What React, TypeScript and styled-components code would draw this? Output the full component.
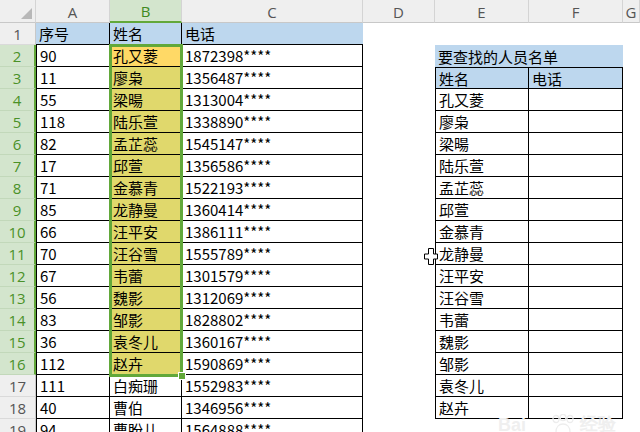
import styled, { createGlobalStyle } from "styled-components";

const GlobalStyle = createGlobalStyle`
  html, body {
    margin: 0;
    padding: 0;
    background: #fff;
    overflow: hidden;
  }
`;

const GREEN = "#62a83a";
const BLUE = "#bdd7ee";

const cols = ["A", "B", "C", "D", "E", "F", "G"];

const left: [string, string, string][] = [
  ["序号", "姓名", "电话"],
  ["90", "孔又菱", "1872398****"],
  ["11", "廖枭", "1356487****"],
  ["55", "梁暘", "1313004****"],
  ["118", "陆乐萱", "1338890****"],
  ["82", "孟芷蕊", "1545147****"],
  ["17", "邱萱", "1356586****"],
  ["71", "金慕青", "1522193****"],
  ["85", "龙静曼", "1360414****"],
  ["66", "汪平安", "1386111****"],
  ["70", "汪谷雪", "1555789****"],
  ["67", "韦蕾", "1301579****"],
  ["56", "魏影", "1312069****"],
  ["83", "邹影", "1828802****"],
  ["36", "袁冬儿", "1360167****"],
  ["112", "赵卉", "1590869****"],
  ["111", "白痴珊", "1552983****"],
  ["40", "曹伯", "1346956****"],
  ["94", "曹盼儿", "1564888****"],
];

const names = [
  "孔又菱", "廖枭", "梁暘", "陆乐萱", "孟芷蕊", "邱萱", "金慕青", "龙静曼",
  "汪平安", "汪谷雪", "韦蕾", "魏影", "邹影", "袁冬儿", "赵卉",
];

const App = () => {
  const rows = [];
  for (let r = 1; r <= 19; r++) {
    const sel = r >= 2 && r <= 16;
    const d = left[r - 1];
    rows.push(
      <RowHead key={`h${r}`} $sel={sel}>
        {r}
      </RowHead>
    );
    // A, B, C
    rows.push(
      <Cell key={`a${r}`} $fill={r === 1 ? BLUE : undefined} $r $b $l={r > 1}>
        {d[0]}
      </Cell>
    );
    rows.push(
      <Cell
        key={`b${r}`}
        $fill={r === 1 ? BLUE : r === 2 ? "#ffd966" : sel ? "#e0d86c" : undefined}
        $r
        $b
      >
        {d[1]}
      </Cell>
    );
    rows.push(
      <Cell key={`c${r}`} $fill={r === 1 ? BLUE : undefined} $r={r > 1} $b>
        {d[2]}
      </Cell>
    );
    // D
    rows.push(<Cell key={`d${r}`} />);
    // E, F
    if (r === 2) {
      rows.push(
        <Cell key={`e${r}`} $fill={BLUE} $span={2}>
          要查找的人员名单
        </Cell>
      );
    } else if (r === 3) {
      rows.push(
        <Cell key={`e${r}`} $fill={BLUE} $t $l $r $b>
          姓名
        </Cell>
      );
      rows.push(
        <Cell key={`f${r}`} $fill={BLUE} $t $r $b>
          电话
        </Cell>
      );
    } else if (r >= 4 && r <= 18) {
      rows.push(
        <Cell key={`e${r}`} $l $r $b>
          {names[r - 4]}
        </Cell>
      );
      rows.push(<Cell key={`f${r}`} $r $b />);
    } else {
      rows.push(<Cell key={`e${r}`} />);
      rows.push(<Cell key={`f${r}`} />);
    }
    rows.push(<Cell key={`g${r}`} />);
  }

  return (
    <>
      <GlobalStyle />
      <Sheet>
        <Grid>
          <Corner>
            <CornerMark />
          </Corner>
          {cols.map((c) => (
            <ColHead key={c} $sel={c === "B"}>
              {c}
            </ColHead>
          ))}
          {rows}
        </Grid>
        <Selection>
          <Handle />
        </Selection>
        <Cursor width="14" height="17" viewBox="0 0 14 17">
          <path
            d="M4.5 0.5h5v5.5h4v5h-4v5.5h-5v-5.5h-4v-5h4z"
            fill="#fff"
            stroke="#000"
            strokeLinejoin="round"
          />
        </Cursor>
        <Watermark>
          <span>Bai</span>
          <svg width="26" height="22" viewBox="0 0 26 22">
            <g fill="none" stroke="#ededed" strokeWidth="1.3">
              <ellipse cx="6" cy="5" rx="3" ry="3.5" />
              <ellipse cx="13" cy="3.5" rx="3" ry="3.2" />
              <ellipse cx="20" cy="5" rx="3" ry="3.5" />
              <path d="M6 18c0-5 3-8 7-8s7 3 7 8c0 3-3 3-7 3s-7 0-7-3z" />
            </g>
          </svg>
          <span>经验</span>
        </Watermark>
      </Sheet>
    </>
  );
};
export default App;

const Sheet = styled.div`
  position: relative;
  width: 640px;
  height: 432px;
  overflow: hidden;
  background: #fff;
  font-family: "Noto Sans CJK SC", "DejaVu Sans", sans-serif;
`;

const Grid = styled.div`
  display: grid;
  grid-template-columns: 36px 74px 72px 181px 72px 94px 94px 1fr;
  grid-template-rows: 23px repeat(19, 22px);
`;

const Corner = styled.div`
  position: relative;
  background: #efefef;
  border-right: 1px solid #d4d4d4;
  border-bottom: 1px solid #c8c8c8;
  box-sizing: border-box;
`;

const CornerMark = styled.div`
  position: absolute;
  right: 3px;
  bottom: 3px;
  width: 0;
  height: 0;
  border-left: 11px solid transparent;
  border-bottom: 11px solid #b8b8b8;
`;

const ColHead = styled.div<{ $sel?: boolean }>`
  display: flex;
  align-items: center;
  justify-content: center;
  box-sizing: border-box;
  font-family: "Open Sans", "Noto Sans", sans-serif;
  font-size: 15px;
  color: ${(p) => (p.$sel ? "#3f8a22" : "#555")};
  background: ${(p) => (p.$sel ? "#d3e5cd" : "#efefef")};
  border-right: 1px solid #d4d4d4;
  border-bottom: ${(p) => (p.$sel ? `2px solid ${GREEN}` : "1px solid #c8c8c8")};
  padding-top: 1px;
`;

const RowHead = styled.div<{ $sel?: boolean }>`
  display: flex;
  align-items: center;
  justify-content: center;
  box-sizing: border-box;
  font-family: "Open Sans", "Noto Sans", sans-serif;
  font-size: 15px;
  color: ${(p) => (p.$sel ? "#4a9128" : "#555")};
  background: ${(p) => (p.$sel ? "#d3e5cd" : "#efefef")};
  border-right: ${(p) => (p.$sel ? `2px solid ${GREEN}` : "1px solid #c8c8c8")};
  border-bottom: 1px solid ${(p) => (p.$sel ? "#c2d8ba" : "#dadada")};
`;

const Cell = styled.div<{
  $fill?: string;
  $t?: boolean;
  $r?: boolean;
  $b?: boolean;
  $l?: boolean;
  $span?: number;
}>`
  box-sizing: border-box;
  grid-column: ${(p) => (p.$span ? `span ${p.$span}` : "auto")};
  background: ${(p) => p.$fill || "transparent"};
  border-top: ${(p) => (p.$t ? "1px solid #000" : "none")};
  border-right: ${(p) => (p.$r ? "1px solid #000" : "none")};
  border-bottom: ${(p) => (p.$b ? "1px solid #000" : "none")};
  border-left: ${(p) => (p.$l ? "1px solid #000" : "none")};
  padding: 0 3px;
  font-size: 15px;
  line-height: 22px;
  color: #000;
  white-space: nowrap;
  overflow: visible;
  display: flex;
  align-items: center;
  padding-top: 1px;
`;

const Selection = styled.div`
  position: absolute;
  left: 109px;
  top: 44px;
  width: 74px;
  height: 333px;
  box-sizing: border-box;
  border: 3px solid ${GREEN};
  pointer-events: none;
`;

const Handle = styled.div`
  position: absolute;
  right: -6px;
  bottom: -6px;
  width: 6px;
  height: 6px;
  background: ${GREEN};
  border: 1px solid #fff;
`;

const Cursor = styled.svg`
  position: absolute;
  left: 424px;
  top: 248px;
`;

const Watermark = styled.div`
  position: absolute;
  left: 498px;
  top: 412px;
  display: flex;
  align-items: flex-end;
  gap: 4px;
  color: #efefef;
  font-family: "Liberation Sans", sans-serif;
  font-size: 18px;
  font-weight: bold;
  span + svg {
    margin-left: 20px;
  }
`;
